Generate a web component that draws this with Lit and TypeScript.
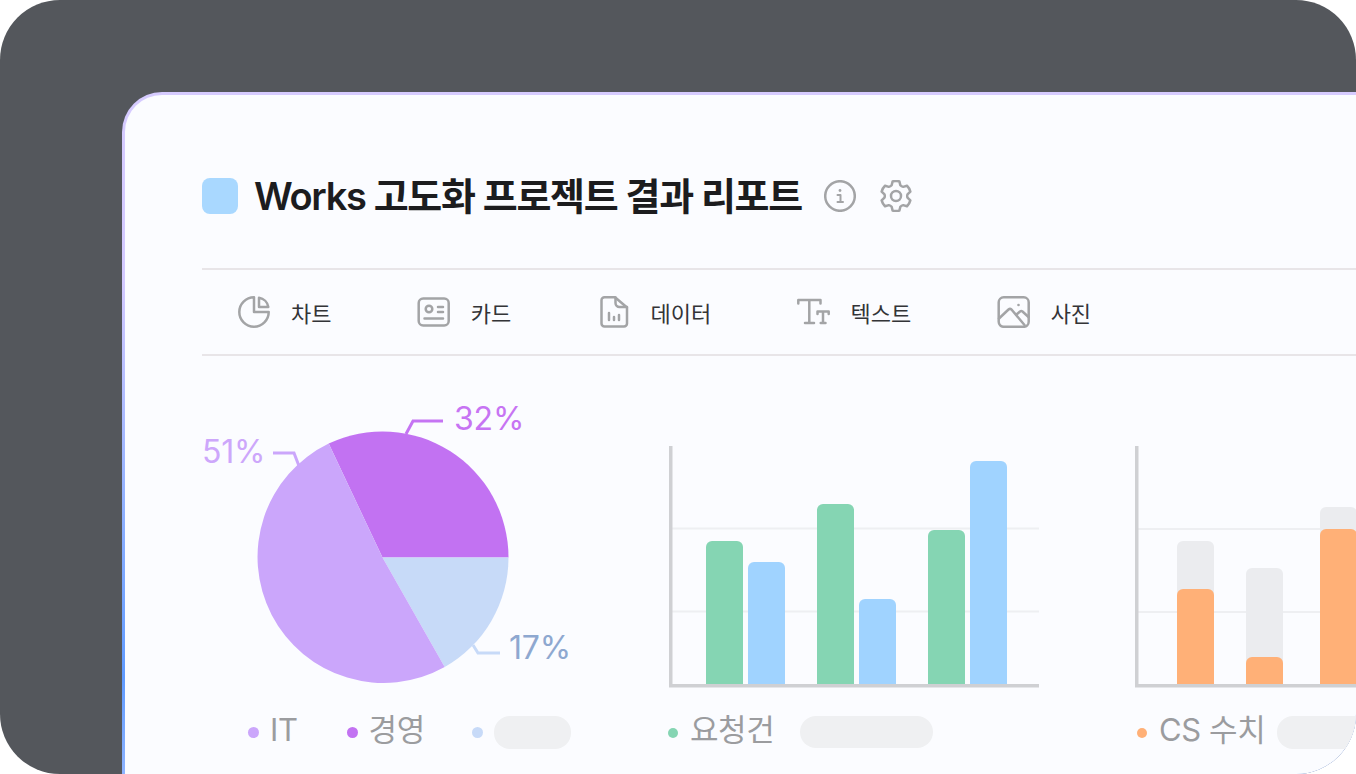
import { LitElement, html, css, svg } from "lit";
import { customElement } from "lit/decorators.js";

const TOP = 390; // svg origin y in page coordinates
const BASE = 685;

type Bar = { x: number; top: number; fill: string };

function bar(b: Bar, left: number) {
  const x = b.x - left, y = b.top - TOP, w = 37, r = 6, h = BASE - TOP;
  return svg`<path d="M${x} ${h}V${y + r}a${r} ${r} 0 0 1 ${r} ${-r}h${w - 2 * r}a${r} ${r} 0 0 1 ${r} ${r}V${h}z" fill=${b.fill}></path>`;
}

const GREEN = "#85d5b3", BLUE = "#a0d3ff", ORANGE = "#ffb077", GRAY = "#ebecef";

const requests: Bar[] = [
  { x: 706, top: 541, fill: GREEN }, { x: 748, top: 562, fill: BLUE },
  { x: 817, top: 504, fill: GREEN }, { x: 859, top: 599, fill: BLUE },
  { x: 928, top: 530, fill: GREEN }, { x: 970, top: 461, fill: BLUE },
];
const cs: Bar[] = [
  { x: 1177, top: 541, fill: GRAY }, { x: 1177, top: 589, fill: ORANGE },
  { x: 1246, top: 568, fill: GRAY }, { x: 1246, top: 657, fill: ORANGE },
  { x: 1320, top: 507, fill: GRAY }, { x: 1320, top: 529, fill: ORANGE },
];

function grid(width: number, offset: number) {
  return svg`<path d="M3 ${138.5 + offset}H${width}M3 ${221.5 + offset}H${width}" stroke="#eeeff2" stroke-width="2.2" fill="none"></path>`;
}
function axis(width: number) {
  return svg`<path d="M1.750 56V295.750H${width}" stroke="#cfd0d3" stroke-width="3.500" fill="none"></path>`;
}

function gearPath() {
  const c = 16, root = 11.6, outer = 15, valley = 10.9;
  const p = (deg: number, r: number) => {
    const a = (deg * Math.PI) / 180;
    return `${(c + r * Math.cos(a)).toFixed(2)} ${(c + r * Math.sin(a)).toFixed(2)}`;
  };
  let d = `M${p(-112, root)}`;
  for (let k = 0; k < 6; k++) {
    const a = -90 + 60 * k;
    d += `L${p(a - 13, outer)}Q${p(a, outer + 0.6)} ${p(a + 13, outer)}L${p(a + 22, root)}Q${p(a + 30, valley)} ${p(a + 38, root)}`;
  }
  return d + "z";
}

const pieIcon = html`<svg viewBox="0 0 33 32" class="ic"><path d="M17 1.300A14.700 14.700 0 1 0 31.700 16H17z"/><path d="M22 1.800A11 11 0 0 1 31.300 11H22z"/></svg>`;
const cardIcon = html`<svg viewBox="0 0 33 32" class="ic"><rect x="1.700" y="2.500" width="30" height="27" rx="4.500"/><circle cx="12" cy="13" r="3.300"/><path d="M21 11h5M21 16h5M7.500 22.500h18.500"/></svg>`;
const fileIcon = html`<svg viewBox="0 0 33 32" class="ic"><path d="M7.500 1.300H18L30 11.500V27.500a3 3 0 0 1-3 3H7.500a3 3 0 0 1-3-3V4.300a3 3 0 0 1 3-3z"/><path d="M18.500 1.500V7a4 4 0 0 0 4 4H30"/><path d="M12 17v7M17 21v3M22 19v5"/></svg>`;
const textIcon = html`<svg viewBox="0 0 33 32" class="ic"><path d="M1.300 7.500V4H23.500V7.500M12.300 4V27M8 27H17"/><path d="M20.500 18V15.500H31.700V18M26 15.500V27M23.700 27H28.500"/></svg>`;
const photoIcon = html`<svg viewBox="0 0 33 32" class="ic"><rect x="1.700" y="1.300" width="30" height="29.500" rx="5"/><path d="M2 22.500L11.500 13.500Q13 12.300 14.500 13.500L27.500 29"/><path d="M19.500 18.500L23 15.500Q24.300 14.700 25.500 15.500L31.500 21"/><circle cx="21.500" cy="9" r="1.300" class="dot"/></svg>`;
const infoIcon = html`<svg viewBox="0 0 32 32" class="ic"><circle cx="16" cy="16" r="14.800"/><path d="M13.500 15h3v7M13.500 22h5.500" stroke-width="2"/><circle cx="16" cy="10.500" r="1.400" class="dot"/></svg>`;
const gearIcon = html`<svg viewBox="0 0 32 32" class="ic"><circle cx="16" cy="16" r="5"/><path d=${gearPath()}/></svg>`;

const tabs = [
  { icon: pieIcon, label: "차트" },
  { icon: cardIcon, label: "카드" },
  { icon: fileIcon, label: "데이터" },
  { icon: textIcon, label: "텍스트" },
  { icon: photoIcon, label: "사진" },
];

@customElement("app-root")
export class AppRoot extends LitElement {
  static styles = css`
    :host {
      display: block;
      width: 1356px;
      height: 774px;
      background: #fff;
      font-family: Inter, "Noto Sans CJK KR", sans-serif;
    }
    .frame {
      width: 1356px;
      height: 774px;
      box-sizing: border-box;
      border-radius: 60px;
      overflow: hidden;
      background: #54575c;
      padding: 92px 0 0 122px;
    }
    .edge {
      width: 1300px;
      height: 760px;
      box-sizing: border-box;
      padding: 3px 0 0 3px;
      border-radius: 40px 0 0 0;
      background: linear-gradient(180deg, #d6cbff 0%, #d3c9ff 25%, #8fb0ff 55%, #5f9aff 77%, #8fb4ff 90%);
    }
    .panel {
      height: 100%;
      box-sizing: border-box;
      border-radius: 37px 0 0 0;
      background: #fbfcff;
      padding: 83px 0 0 77px;
    }
    .head {
      height: 36px;
      display: flex;
      align-items: center;
    }
    .swatch {
      width: 36px;
      height: 36px;
      border-radius: 8px;
      background: #a9d8ff;
      margin-right: 16px;
    }
    h1 {
      margin: 0 22px 0 0;
      font-size: 38px;
      font-weight: 600;
      line-height: 36px;
      letter-spacing: -1.34px;
      color: #1c1c1e;
      white-space: nowrap;
    }
    .head .ic { width: 32px; height: 32px; margin-right: 24px; }
    .ic {
      fill: none;
      stroke: #a3a4a6;
      stroke-width: 2.5;
      stroke-linecap: round;
      stroke-linejoin: round;
      flex: none;
    }
    .ic .dot { fill: #a3a4a6; stroke: none; }
    .tabs {
      margin-top: 54px;
      height: 84px;
      border-top: 2px solid #e8e5e8;
      border-bottom: 2px solid #e8e5e8;
      display: flex;
      align-items: center;
      padding-left: 35px;
      gap: 85.3px;
    }
    .tab {
      display: flex;
      align-items: center;
      gap: 21px;
      font-size: 22px;
      color: #333437;
      white-space: nowrap;
    }
    .tab .ic { width: 33px; height: 32px; }
    .charts {
      margin-top: 34px;
      display: flex;
    }
    .col { flex: none; }
    .col svg.plot { display: block; height: 300px; }
    .pie { width: 467px; }
    .pie svg.plot { width: 467px; }
    .mid { width: 466px; }
    .mid svg.plot { width: 466px; }
    .end { width: 230px; }
    .end svg.plot { width: 230px; }
    .plot text {
      font-family: Inter, sans-serif;
      font-size: 32px;
      letter-spacing: -0.2px;
    }
    .legend {
      margin-top: 25px;
      height: 34px;
      display: flex;
      align-items: center;
      font-size: 31px;
      letter-spacing: -0.4px;
      color: #9b9c9f;
      white-space: nowrap;
    }
    .pie .legend { padding-left: 46px; }
    .mid .legend { margin-left: -1px; }
    .end .legend { margin-left: 2px; }
    .legend i {
      width: 10px;
      height: 10px;
      border-radius: 50%;
      margin-right: 12px;
      flex: none;
      position: relative;
      top: 1px;
    }
    .pie .legend i { width: 11px; height: 11px; margin-right: 11px; top: 0; }
    .legend .name { line-height: 34px; margin-bottom: 4px; }
    .pill {
      height: 33px;
      border-radius: 16px;
      background: #eff0f2;
      flex: none;
    }
    .it { margin-right: 49px; }
    .biz { margin-right: 47px; }
    .req { margin-right: 26px; }
    .cs { margin-right: 12px; }
    .pill.p1 { width: 77px; }
    .pill.p2 { width: 133px; height: 32px; margin-top: -1px; }
    .pill.p3 { width: 120px; }
  `;

  render() {
    return html`
      <div class="frame">
        <div class="edge">
          <div class="panel">
            <div class="head">
              <div class="swatch"></div>
              <h1>Works 고도화 프로젝트 결과 리포트</h1>
              ${infoIcon}${gearIcon}
            </div>
            <div class="tabs">
              ${tabs.map((t) => html`<div class="tab">${t.icon}<span>${t.label}</span></div>`)}
            </div>
            <div class="charts">
              <div class="col pie">
                <svg class="plot" viewBox="0 0 467 300">
                  <path d="M180.500 167.500L126.700 53.500A126 126 0 0 1 306.500 167.500z" fill="#c272f2"></path>
                  <path d="M180.500 167.500H306.500A126 126 0 0 1 242.700 277.100z" fill="#c7daf8"></path>
                  <path d="M180.500 167.500L242.700 277.100A126 126 0 1 1 126.700 53.500z" fill="#cba6fb"></path>
                  <path d="M204 44l7-13h30" fill="none" stroke="#c574f3" stroke-width="3"></path>
                  <path d="M97 76l-5-13H71" fill="none" stroke="#cba6fb" stroke-width="3"></path>
                  <path d="M271 255l5 8h22" fill="none" stroke="#c7daf8" stroke-width="3"></path>
                  <text x="252" y="39.500" fill="#c774f3">32%</text>
                  <text x="0" y="72.500" fill="#cda7fb">51%</text>
                  <text x="307" y="269" fill="#8ea8d0">17%</text>
                </svg>
                <div class="legend">
                  <i style="background:#cba6fb"></i><span class="name it">IT</span>
                  <i style="background:#c272f2"></i><span class="name biz">경영</span>
                  <i style="background:#c7daf8"></i><div class="pill p1"></div>
                </div>
              </div>
              <div class="col mid">
                <svg class="plot" viewBox="0 0 466 300">
                  ${grid(370, 0)}
                  ${requests.map((b) => bar(b, 669))}
                  ${axis(370)}
                </svg>
                <div class="legend">
                  <i style="background:#85d5b3"></i><span class="name req">요청건</span>
                  <div class="pill p2"></div>
                </div>
              </div>
              <div class="col end">
                <svg class="plot" viewBox="0 0 230 300">
                  ${grid(230, 0.5)}
                  ${cs.map((b) => bar(b, 1135))}
                  ${axis(230)}
                </svg>
                <div class="legend">
                  <i style="background:#ffb077"></i><span class="name cs">CS 수치</span>
                  <div class="pill p3"></div>
                </div>
              </div>
            </div>
          </div>
        </div>
      </div>
    `;
  }
}
